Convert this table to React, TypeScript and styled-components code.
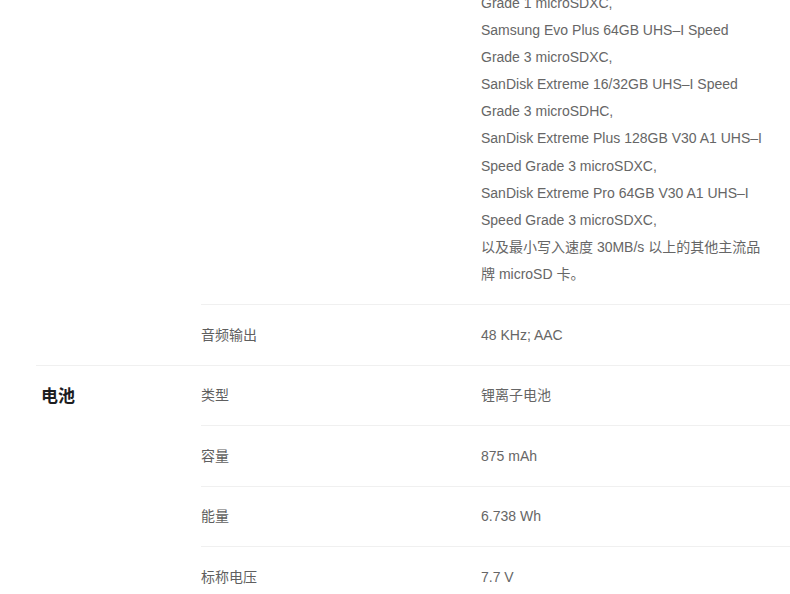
import React from 'react';
import styled, { createGlobalStyle } from 'styled-components';

const GlobalStyle = createGlobalStyle`
	html, body {
		margin: 0;
		padding: 0;
		background: #fff;
		overflow: hidden;
	}
	body {
		font-family: 'Liberation Sans', 'Noto Sans CJK SC', sans-serif;
		-webkit-font-smoothing: antialiased;
	}
`;

const Page = styled.div`
	width: 790px;
	margin-top: -10px;
	padding-left: 36px;
	box-sizing: border-box;
`;

const Section = styled.section<{ $divided?: boolean }>`
	display: grid;
	grid-template-columns: 165px 1fr;
	border-top: ${(p) => (p.$divided ? '1px solid #f0f0f0' : 'none')};
`;

const SectionTitle = styled.h3`
	margin: 0;
	padding: 17px 0 0 5px;
	align-self: start;
	font-size: 17px;
	font-weight: 600;
	color: #1d1d1f;
	line-height: 27px;
`;

const Rows = styled.div`
	display: flex;
	flex-direction: column;
`;

const Row = styled.div<{ $first?: boolean }>`
	display: grid;
	grid-template-columns: 280px 290px;
	padding: 16.5px 0 16px;
	border-top: ${(p) => (p.$first ? 'none' : '1px solid #f0f0f0')};
	font-size: 14px;
	line-height: 27.1px;
	color: #666;
`;

const FirstRow = styled(Row)`
	padding-top: 0;
	padding-bottom: 16px;
`;

const Label = styled.div`
	color: #5f5f5f;
`;

const Value = styled.div`
	color: #666;
`;

const cardLines = [
	'Grade 1 microSDXC,',
	'Samsung Evo Plus 64GB UHS–I Speed Grade 3 microSDXC,',
	'SanDisk Extreme 16/32GB UHS–I Speed Grade 3 microSDHC,',
	'SanDisk Extreme Plus 128GB V30 A1 UHS–I Speed Grade 3 microSDXC,',
	'SanDisk Extreme Pro 64GB V30 A1 UHS–I Speed Grade 3 microSDXC,',
	'以及最小写入速度 30MB/s 以上的其他主流品牌 microSD 卡。',
];

const battery = [
	{ label: '类型', value: '锂离子电池' },
	{ label: '容量', value: '875 mAh' },
	{ label: '能量', value: '6.738 Wh' },
	{ label: '标称电压', value: '7.7 V' },
];

const App = () => {
	return (
		<>
			<GlobalStyle />
			<Page>
				<Section>
					<div />
					<Rows>
						<FirstRow $first>
							<Label />
							<Value>
								{cardLines.map((line) => (
									<div key={line}>{line}</div>
								))}
							</Value>
						</FirstRow>
						<Row>
							<Label>音频输出</Label>
							<Value>48 KHz; AAC</Value>
						</Row>
					</Rows>
				</Section>
				<Section $divided>
					<SectionTitle>电池</SectionTitle>
					<Rows>
						{battery.map((item, i) => (
							<Row key={item.label} $first={i === 0}>
								<Label>{item.label}</Label>
								<Value>{item.value}</Value>
							</Row>
						))}
					</Rows>
				</Section>
			</Page>
		</>
	);
};

export default App;
